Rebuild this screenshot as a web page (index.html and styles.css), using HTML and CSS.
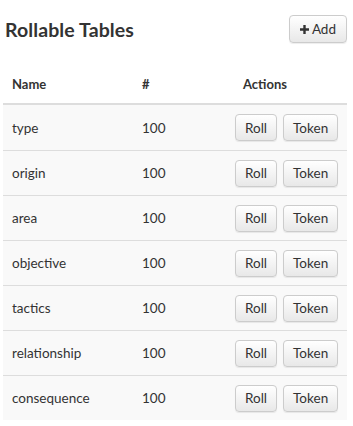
FILE: index.html
```html
<!DOCTYPE html>
<html>
<head>
<meta charset="utf-8">
<link rel="stylesheet" href="styles.css">
</head>
<body>
<div class="page">
  <div class="head">
    <h1 class="title">Rollable Tables</h1>
    <button class="btn add"><svg class="plus" width="9" height="9" viewBox="0 0 9 9"><path d="M3.3 0h2.4v3.3H9v2.4H5.7V9H3.3V5.7H0V3.3h3.3z" fill="#333"/></svg>Add</button>
  </div>
  <table class="tbl">
    <colgroup><col class="c-name"><col class="c-num"><col class="c-act"></colgroup>
    <thead>
      <tr><th>Name</th><th>#</th><th class="th-act">Actions</th></tr>
    </thead>
    <tbody>
      <tr><td>type</td><td>100</td><td class="acts"><button class="btn">Roll</button><button class="btn">Token</button></td></tr>
      <tr><td>origin</td><td>100</td><td class="acts"><button class="btn">Roll</button><button class="btn">Token</button></td></tr>
      <tr><td>area</td><td>100</td><td class="acts"><button class="btn">Roll</button><button class="btn">Token</button></td></tr>
      <tr><td>objective</td><td>100</td><td class="acts"><button class="btn">Roll</button><button class="btn">Token</button></td></tr>
      <tr><td>tactics</td><td>100</td><td class="acts"><button class="btn">Roll</button><button class="btn">Token</button></td></tr>
      <tr><td>relationship</td><td>100</td><td class="acts"><button class="btn">Roll</button><button class="btn">Token</button></td></tr>
      <tr><td>consequence</td><td>100</td><td class="acts"><button class="btn">Roll</button><button class="btn">Token</button></td></tr>
    </tbody>
  </table>
</div>
</body>
</html>
```
FILE: styles.css
```css
html, body { margin: 0; padding: 0; background: #fff; }
body { font-family: "Lato", "Open Sans", sans-serif; color: #333; }
.page { padding: 15px 6px 0 3px; }
.head { display: flex; justify-content: space-between; align-items: center; padding-left: 2px; height: 28px; }
.title { margin: 0; font-size: 19.5px; font-weight: 700; color: #333; letter-spacing: 0.1px; }
.btn {
  font-family: inherit; font-size: 13.5px; color: #333;
  height: 27px; padding: 0 9px;
  border: 1px solid #ccc; border-radius: 4px;
  background: linear-gradient(#fff, #e8e8e8);
  box-shadow: inset 0 1px 0 rgba(255,255,255,.15), 0 1px 1px rgba(0,0,0,.075);
}
.add { height: 28px; padding: 0 10px; display: inline-flex; align-items: center; gap: 3px; }
.plus { display: block; }
.tbl { width: 344px; margin-top: 25px; border-collapse: collapse; table-layout: fixed; font-size: 13.5px; }
.c-name { width: 130px; }
.c-num { width: 94px; }
.tbl th { text-align: left; font-weight: 700; font-size: 13px; padding: 8px 9px 11px; height: 15px; border-bottom: 2px solid #ddd; }
.tbl th.th-act { padding-left: 16px; }
.tbl td { padding: 0 9px; height: 44px; border-top: 1px solid #ddd; vertical-align: middle; }
.tbl tbody tr:first-child td { border-top: 0; height: 45px; }
.tbl tbody tr { background: #f9f9f9; }
.tbl td.acts { padding-left: 8px; white-space: nowrap; }
.acts .btn { margin-right: 6px; }
.acts .btn:last-child { margin-right: 0; }
```
